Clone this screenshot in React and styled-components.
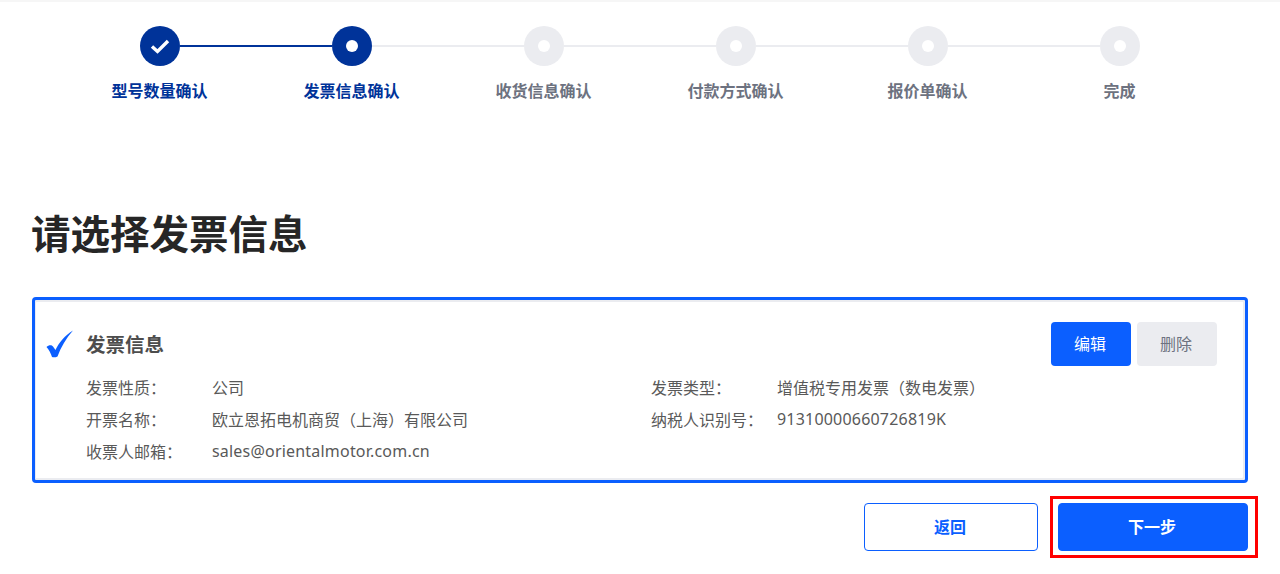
import React from "react";
import styled, { createGlobalStyle } from "styled-components";

const GlobalStyle = createGlobalStyle`
  html, body {
    margin: 0;
    padding: 0;
    background: #fff;
    font-family: "Noto Sans", "Noto Sans CJK SC", sans-serif;
  }
`;

const Page = styled.div`
  width: 1280px;
  height: 574px;
  overflow: hidden;
  box-sizing: border-box;
  border-top: 2px solid #f6f6f6;
  padding: 0 32px;
`;

const Stepper = styled.div`
  display: grid;
  grid-template-columns: repeat(6, 192px);
  padding: 24px 0 0 32px;
`;

const Step = styled.div`
  display: flex;
  flex-direction: column;
  align-items: center;
`;

const Track = styled.div`
  width: 100%;
  display: flex;
  align-items: center;
`;

const Line = styled.div`
  flex: 1;
  height: 2px;
  background: ${(p) => (p.$hidden ? "transparent" : p.$done ? "#003399" : "#ebecf0")};
`;

const Dot = styled.div`
  width: 40px;
  height: 40px;
  flex: none;
  border-radius: 50%;
  display: flex;
  align-items: center;
  justify-content: center;
  background: ${(p) => (p.$active ? "#003399" : "#ebecf0")};

  > i {
    width: 12px;
    height: 12px;
    border-radius: 50%;
    background: #fff;
  }
`;

const StepLabel = styled.div`
  margin: 14px 1px 1px 0;
  font-size: 16px;
  line-height: 22px;
  font-weight: 700;
  color: ${(p) => (p.$active ? "#003399" : "#6d7280")};
`;

const Title = styled.h1`
  margin: 103px 0 0 -1px;
  font-size: 39.5px;
  line-height: 56px;
  font-weight: 700;
  color: #262626;
`;

const Card = styled.div`
  margin-top: 35px;
  height: 186px;
  box-sizing: border-box;
  border: 3px solid #0b5fff;
  border-radius: 4px;
  box-shadow: inset -2px -2px 0 #ebecf0, inset 1px 2px 0 #ebecf0;
  padding: 22px 28px 0 11px;
  display: flex;
  flex-direction: column;
`;

const CardHead = styled.div`
  display: flex;
  align-items: center;
  height: 44px;
`;

const CheckMark = styled.svg`
  width: 28px;
  height: 28px;
  flex: none;
  margin-right: 12px;
`;

const CardTitle = styled.div`
  flex: 1;
  padding-bottom: 2px;
  font-size: 19.5px;
  font-weight: 700;
  color: #4d4d4d;
`;

const SmallButton = styled.button`
  width: 80px;
  height: 44px;
  margin-left: 6px;
  padding: 0 2px 2px 0;
  border: 0;
  border-radius: 4px;
  font: inherit;
  font-size: 16px;
  background: ${(p) => (p.$muted ? "#ebecf0" : "#0b5fff")};
  color: ${(p) => (p.$muted ? "#6d7280" : "#fff")};
`;

const Fields = styled.div`
  display: grid;
  grid-template-columns: 565px 1fr;
  grid-auto-rows: 32px;
  margin-top: 5px;
  padding-left: 40px;
`;

const Field = styled.div`
  display: flex;
  align-items: center;
  font-size: 16px;
  color: #595959;
`;

const FieldName = styled.span`
  width: 126px;
  flex: none;
`;

const LatinValue = styled.span`
  letter-spacing: 0.2px;
`;

const Actions = styled.div`
  margin-top: 20px;
  display: flex;
  justify-content: flex-end;
  gap: 20px;
`;

const ActionButton = styled.button`
  position: relative;
  width: ${(p) => (p.$primary ? "190px" : "174px")};
  height: 48px;
  box-sizing: border-box;
  padding: 0 2px 2px 0;
  border: 1px solid #0b5fff;
  border-radius: 4px;
  font: inherit;
  font-size: 16px;
  font-weight: 700;
  background: ${(p) => (p.$primary ? "#0b5fff" : "#fff")};
  color: ${(p) => (p.$primary ? "#fff" : "#0b5fff")};
`;

// red annotation frame that sits around the next button
const Highlight = styled.span`
  position: absolute;
  left: -9px;
  right: -11px;
  top: -8px;
  bottom: -8px;
  border: 3px solid #ff0000;
`;

const steps = ["型号数量确认", "发票信息确认", "收货信息确认", "付款方式确认", "报价单确认", "完成"];
const current = 1;

export default function App() {
  return (
    <>
      <GlobalStyle />
      <Page>
        <Stepper>
          {steps.map((label, i) => (
            <Step key={label}>
              <Track>
                <Line $hidden={i === 0} $done={i <= current} />
                <Dot $active={i <= current}>
                  {i < current ? (
                    <svg width="20" height="20" viewBox="0 0 20 20" fill="none">
                      <path d="M2 10.5 L7.5 15.5 L18 5" stroke="#fff" strokeWidth="3.4" />
                    </svg>
                  ) : (
                    <i />
                  )}
                </Dot>
                <Line $hidden={i === steps.length - 1} $done={i < current} />
              </Track>
              <StepLabel $active={i <= current}>{label}</StepLabel>
            </Step>
          ))}
        </Stepper>
        <Title>请选择发票信息</Title>
        <Card>
          <CardHead>
            <CheckMark viewBox="0 0 28 28">
              <path
                d="M0.5 17 C2.5 15 5.5 14.5 7 16.5 L9.5 20 C13 12.5 18.5 6 27 0.5 C20 8.5 15 17 11.5 26.5 C9.5 27.5 7.5 27.5 6 27 C5 23.5 3 20 0.5 17 Z"
                fill="#0b5fff"
              />
            </CheckMark>
            <CardTitle>发票信息</CardTitle>
            <SmallButton>编辑</SmallButton>
            <SmallButton $muted>删除</SmallButton>
          </CardHead>
          <Fields>
            <Field><FieldName>发票性质：</FieldName>公司</Field>
            <Field><FieldName>发票类型：</FieldName>增值税专用发票（数电发票）</Field>
            <Field><FieldName>开票名称：</FieldName>欧立恩拓电机商贸（上海）有限公司</Field>
            <Field><FieldName>纳税人识别号：</FieldName><LatinValue>91310000660726819K</LatinValue></Field>
            <Field><FieldName>收票人邮箱：</FieldName><LatinValue>sales@orientalmotor.com.cn</LatinValue></Field>
          </Fields>
        </Card>
        <Actions>
          <ActionButton>返回</ActionButton>
          <ActionButton $primary>
            下一步
            <Highlight />
          </ActionButton>
        </Actions>
      </Page>
    </>
  );
}
